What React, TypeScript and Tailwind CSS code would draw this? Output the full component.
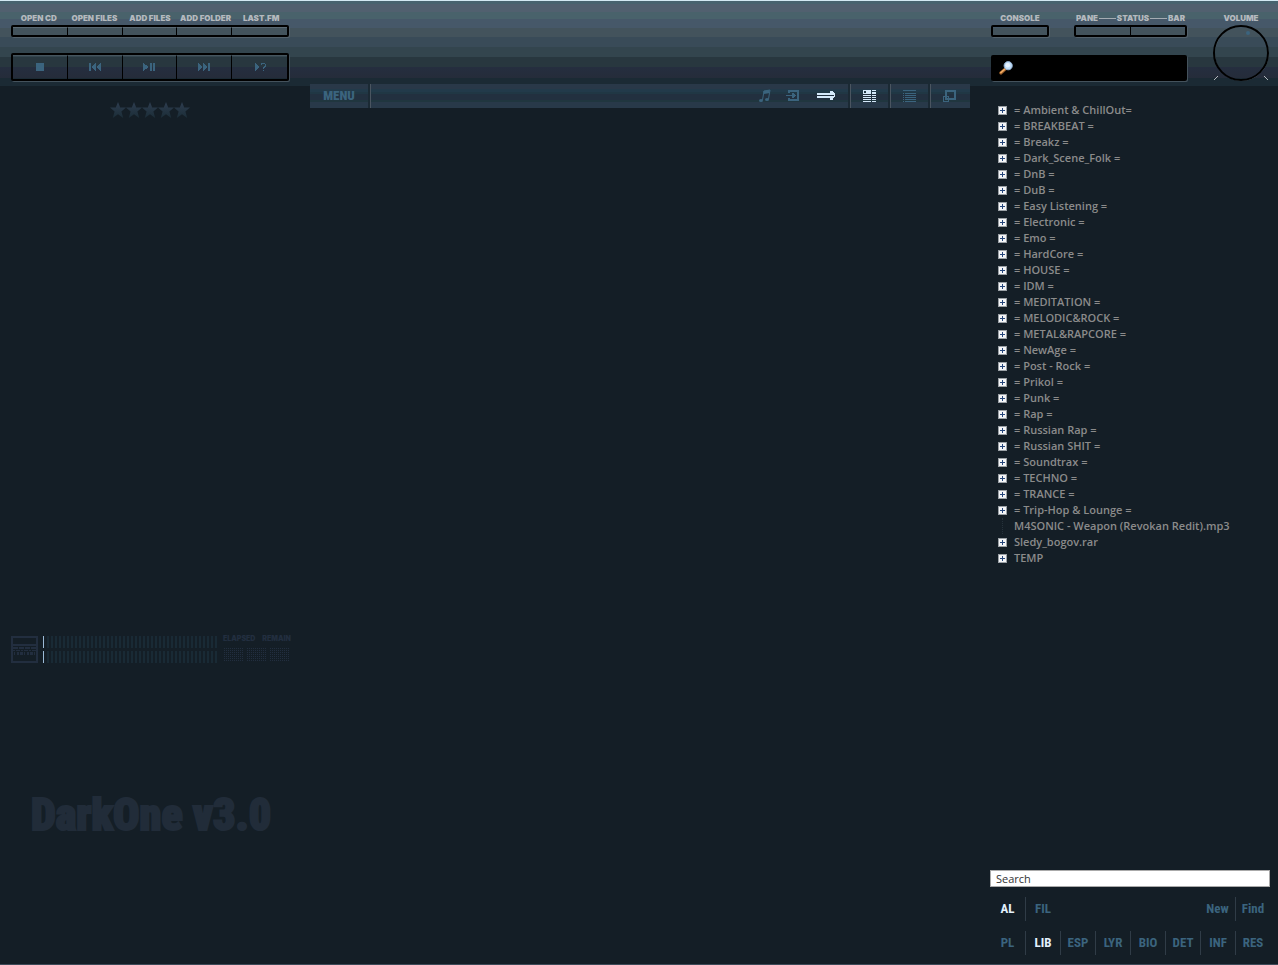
const HEADER_BG =
  "bg-[linear-gradient(180deg,#d3e9f3_0px,#d3e9f3_1px,#48636f_1px,#48636f_4px,#51606f_4px,#51606f_12px,#49626b_12px,#49626b_19px,#465869_19px,#465869_28px,#43535c_28px,#43535c_37px,#394b58_37px,#394b58_47px,#33454e_47px,#33454e_57px,#28373f_57px,#28373f_67px,#252e3f_67px,#252c3a_78px,#1b2a34_78px,#1b2a34_86px,#141e26_86px)]";

const LABEL = "font-[Inter,sans-serif] text-[8px] leading-[8px] font-black text-[#b4b9be] whitespace-nowrap";
const CONDENSED = "font-['Roboto_Condensed',Roboto,sans-serif]";

const openButtons = ["OPEN CD", "OPEN FILES", "ADD FILES", "ADD FOLDER", "LAST.FM"];

const playback = [
  { name: "Stop", icon: <path d="M5 2h8v8H5z" /> },
  { name: "Previous", icon: <path d="M3 2h2v8H3zM10 2v8L5 6zM15 2v8l-5-4z" /> },
  { name: "Play or pause", icon: <path d="M3 2l6 4-6 4zM10 2h2v8h-2zM13 2h2v8h-2z" /> },
  { name: "Next", icon: <path d="M3 2l5 4-5 4zM8 2l5 4-5 4zM13 2h2v8h-2z" /> },
  { name: "Random", icon: <path d="M4 2l5 4-5 4zM10 2h4v1h1v3h-1v1h-1v1h-1V6h1V5h1V3h-3v1h-1zM12 9h1v1h-1z" /> },
];

const folders = [
  "= Ambient & ChillOut=",
  "= BREAKBEAT =",
  "= Breakz =",
  "= Dark_Scene_Folk =",
  "= DnB =",
  "= DuB =",
  "= Easy Listening =",
  "= Electronic =",
  "= Emo =",
  "= HardCore =",
  "= HOUSE =",
  "= IDM =",
  "= MEDITATION =",
  "= MELODIC&ROCK =",
  "= METAL&RAPCORE =",
  "= NewAge =",
  "= Post - Rock =",
  "= Prikol =",
  "= Punk =",
  "= Rap =",
  "= Russian Rap =",
  "= Russian SHIT =",
  "= Soundtrax =",
  "= TECHNO =",
  "= TRANCE =",
  "= Trip-Hop & Lounge =",
  "M4SONIC - Weapon (Revokan Redit).mp3",
  "Sledy_bogov.rar",
  "TEMP",
];

const tabs = ["PL", "LIB", "ESP", "LYR", "BIO", "DET", "INF", "RES"];

const Star = () => (
  <svg width="16" height="16" viewBox="0 0 16 16" aria-hidden="true">
    <path d="M8 0l2.200 5.600H16l-4.600 3.900L13.200 16 8 12.200 2.800 16l1.800-6.500L0 5.600h5.800z" fill="url(#starFill)" />
  </svg>
);

const LeftHeader = () => (
  <div className="w-[310px] shrink-0 px-[11px] pt-[14px]">
    <div className="w-[278px]">
      <div className="grid grid-cols-5">
        {openButtons.map((label) => (
          <label key={label} htmlFor={label} className={`${LABEL} text-center`}>{label}</label>
        ))}
      </div>
      <div className="mt-[3px] grid h-3 grid-cols-5 divide-x divide-black rounded-xs border-2 border-black shadow-[1px_1px_0_#53616b]">
        {openButtons.map((label) => (
          <button key={label} id={label} className="border-t border-t-[#5b6a75] bg-[#43535c]" />
        ))}
      </div>
      <div className="mt-4 grid h-7 grid-cols-5 divide-x divide-black rounded-xs border-2 border-black shadow-[1px_1px_0_#44525c]">
        {playback.map(({ name, icon }) => (
          <button key={name} aria-label={name} className="flex items-center justify-center border-t border-t-[#46555e] pb-px">
            <svg width="18" height="12" viewBox="0 0 18 12" fill="#3b647e" shapeRendering="crispEdges">{icon}</svg>
          </button>
        ))}
      </div>
    </div>
  </div>
);

const RightHeader = () => (
  <div className="flex w-[308px] shrink-0 pt-[14px] pl-[21px]">
    <div className="w-[196px]">
      <div className="flex justify-between">
        <div className="w-[58px]">
          <label htmlFor="console" className={`${LABEL} block text-center`}>CONSOLE</label>
          <button id="console" className="mt-[3px] block h-3 w-full rounded-xs border-2 border-black shadow-[1px_1px_0_#53616b]" />
        </div>
        <div className="w-[113px]">
          <div className={`${LABEL} flex items-center gap-px px-[2px]`}>
            <span>PANE</span>
            <span className="h-px flex-1 bg-[#a4acb2]" />
            <span>STATUS</span>
            <span className="h-px flex-1 bg-[#a4acb2]" />
            <span>BAR</span>
          </div>
          <div className="mt-[3px] grid h-3 grid-cols-2 divide-x divide-black rounded-xs border-2 border-black shadow-[1px_1px_0_#53616b]">
            <button aria-label="Toggle pane" />
            <button aria-label="Toggle status bar" />
          </div>
        </div>
      </div>
      <label className="mt-[18px] flex h-[26px] items-center rounded-xs bg-black pl-2 shadow-[1px_1px_0_#44525c]">
        <svg width="16" height="16" viewBox="0 0 16 16" aria-hidden="true">
          <path d="M2 13.500L6.500 9.500" stroke="#8c5424" strokeWidth="3.500" strokeLinecap="round" />
          <path d="M2 13L6 9.500" stroke="#f0a860" strokeWidth="2" strokeLinecap="round" />
          <circle cx="10" cy="5.500" r="4.500" fill="#bfdcf8" stroke="#91aed0" />
          <circle cx="9.500" cy="5" r="2.500" fill="#e6f3ff" />
        </svg>
        <input aria-label="Quick search" className="w-full min-w-0 bg-transparent px-1 text-xs text-slate-300 outline-none" />
      </label>
    </div>
    <div className="ml-6 flex w-[60px] flex-col items-center">
      <span className={LABEL}>VOLUME</span>
      <button aria-label="Volume" className="mt-[3px]">
        <svg width="60" height="57" viewBox="0 0 60 57" fill="none">
          <circle cx="30.500" cy="28.500" r="27" stroke="#5b6a74" />
          <circle cx="30" cy="28" r="27" stroke="#000" strokeWidth="2" />
          <circle cx="37" cy="8" r="2" fill="#3b647e" />
          <path d="M3 55l4-4M53 51l4 4" stroke="#b4b9be" />
        </svg>
      </button>
    </div>
  </div>
);

const Toolbar = () => {
  const section = "flex h-6 items-center justify-center border-l border-[#4a5560]";
  return (
    <div className="flex h-6 items-center bg-[linear-gradient(180deg,#293848_0px,#293848_5px,#223a4a_5px,#223a4a_8px,#203744_8px,#203744_10px,#22303f_10px,#22303f_16px,#20363f_16px,#20363f_18px,#283949_18px)]">
      <button className={`${CONDENSED} h-6 w-[60px] border-r-2 border-[#1b2a34] text-[13px] font-black text-[#3b647e]`}>MENU</button>
      <div className={`${section} flex-1 justify-end gap-[13px] border-r-2 border-r-[#1b2a34] pr-3`}>
        <button aria-label="Now playing">
          <svg width="16" height="16" viewBox="0 0 16 16" fill="none" stroke="#3b647e">
            <path d="M4.500 12L6 3l6-1-1.500 9" />
            <path d="M5.500 4.500l6-1" strokeWidth="3" />
            <ellipse cx="3" cy="12.500" rx="2" ry="1.500" fill="#3b647e" stroke="none" />
            <ellipse cx="9" cy="11.500" rx="2" ry="1.500" fill="#3b647e" stroke="none" />
          </svg>
        </button>
        <button aria-label="Follow cursor">
          <svg width="16" height="16" viewBox="0 0 16 16" fill="#3b647e" className="overflow-visible" shapeRendering="crispEdges">
            <path d="M1 2h11v11H1v-3h2v1h7V4H3v1H1z" />
            <path d="M-1 7h6V5h2v1h1v1h1v1H8v1H7v1H5V8h-6z" />
          </svg>
        </button>
        <button aria-label="Playback order">
          <svg width="20" height="16" viewBox="0 0 20 16" fill="#d5e9fa" shapeRendering="crispEdges">
            <path d="M1 5h13V3h3v1h1v1h1v2H1zM1 8h18v1h-1v1h-1v2h-3v-2H1z" />
            <path d="M18 7h1v1h-1z" />
          </svg>
        </button>
      </div>
      <button aria-label="Cover view" className={`${section} w-10 border-r-2 border-r-[#1b2a34] pr-px`}>
        <svg width="14" height="14" viewBox="0 0 14 14" fill="#d5e9fa" shapeRendering="crispEdges">
          <path fillRule="evenodd" d="M1 1h8v4H1zM2 2v2h2V2zM10 1h4v1h-4zM10 3h4v2h-4zM1 6h8v1H1zM10 6h4v1h-4zM1 8h8v1H1zM10 8h4v1h-4zM1 10h8v1H1zM10 10h4v1h-4zM1 12h8v1H1zM10 12h4v1h-4z" />
        </svg>
      </button>
      <button aria-label="List view" className={`${section} w-10 border-r-2 border-r-[#1b2a34] pr-px`}>
        <svg width="14" height="14" viewBox="0 0 14 14" fill="#3b647e" shapeRendering="crispEdges">
          <path d="M1 1h13v1H1zM1 4h1v1H1zM3 4h11v1H3zM1 6h1v1H1zM3 6h11v1H3zM1 8h1v1H1zM3 8h11v1H3zM1 10h1v1H1zM3 10h11v1H3zM1 12h1v1H1zM3 12h11v1H3z" />
        </svg>
      </button>
      <button aria-label="Windows" className={`${section} w-10 pr-[3px]`}>
        <svg width="14" height="14" viewBox="0 0 14 14" fill="none" stroke="#3b647e" shapeRendering="crispEdges">
          <path d="M4 2h9v8H4z" strokeWidth="2" />
          <path d="M1.500 7.500h5v5h-5z" />
        </svg>
      </button>
    </div>
  );
};

const Player = () => (
  <div className="flex w-[310px] shrink-0 flex-col px-[11px]">
    <div className="ml-[99px] flex pt-[18px]">
      <svg width="0" height="0" aria-hidden="true">
        <linearGradient id="starFill" x1="0" y1="0" x2="0" y2="1">
          <stop offset="0" stopColor="#2e3d50" />
          <stop offset="1" stopColor="#1b2d37" />
        </linearGradient>
      </svg>
      {[1, 2, 3, 4, 5].map((n) => <Star key={n} />)}
    </div>
    <div className="mt-auto flex items-start pb-[127px]">
      <svg width="27" height="27" viewBox="0 0 27 27" fill="none" stroke="#222e3f" aria-hidden="true" shapeRendering="crispEdges">
        <path d="M1 1h25v25H1zM1 9h25" strokeWidth="2" />
        <path d="M2 12h24" strokeWidth="2" strokeDasharray="5 1" />
        <path d="M2 14.500h23" strokeDasharray="2 1 4 1" />
        <path d="M3 17.500h21" strokeWidth="3" strokeDasharray="1 2 2 1 3 1" />
      </svg>
      <svg className="ml-[5px]" width="175" height="28" viewBox="0 0 175 28" aria-hidden="true" shapeRendering="crispEdges">
        <path d="M4 6h171M4 21h171" stroke="#192a35" strokeWidth="12" strokeDasharray="2 2" />
        <path d="M0 0h1v12H0zM0 15h1v12H0z" fill="#9bbad6" />
      </svg>
      <div className="ml-[5px] w-[68px]">
        <div className="flex justify-between font-[Inter,sans-serif] text-[7px] leading-[6px] font-black text-[#222e3f]">
          <span>ELAPSED</span>
          <span>REMAIN</span>
        </div>
        <svg className="mt-[6px]" width="68" height="14" viewBox="0 0 68 14" aria-hidden="true" shapeRendering="crispEdges">
          {[0, 2, 4, 6, 8, 10, 12].map((y) => (
            <path key={y} d={`M1 ${y + 0.5}h20M24 ${y + 0.5}h20M47 ${y + 0.5}h20`} stroke="#222e3f" strokeDasharray="1 1" />
          ))}
        </svg>
      </div>
    </div>
    <h1 className={`${CONDENSED} pb-[125px] pl-5 text-[44px] leading-[48px] font-black whitespace-nowrap text-[#212c39] [-webkit-text-stroke:2px_#212c39]`}>
      DarkOne v3.0
    </h1>
  </div>
);

const Library = () => (
  <aside className="flex w-[308px] shrink-0 flex-col pt-[18px] pr-2 pl-5 font-['Open_Sans','Noto_Sans',sans-serif]">
    <ul className="ml-2">
      {folders.map((name) => (
        <li key={name} className="flex h-4 items-center text-[11px] leading-4 font-semibold whitespace-nowrap text-[#8b8b8b]">
          {name.endsWith(".mp3") ? (
            <span className="ml-1 h-4 w-3 border-l border-dotted border-[#26323b]" />
          ) : (
            <button aria-label={`Expand ${name}`} className="mr-[7px]">
              <svg width="9" height="9" viewBox="0 0 9 9" shapeRendering="crispEdges">
                <path d="M0 0h9v9H0z" fill="#9aa0a5" />
                <path d="M1 1h7v7H1z" fill="#f4f5f7" />
                <path d="M4 2h1v2h2v1H5v2H4V5H2V4h2z" fill="#24457a" />
              </svg>
            </button>
          )}
          {name}
        </li>
      ))}
    </ul>
    <div className="mt-auto">
      <input
        aria-label="Search library"
        defaultValue="Search"
        className="block h-[17px] w-full border border-[#aaaaaa] bg-white px-[5px] text-[11px] leading-4 text-[#333333] outline-none"
      />
      <nav className={`${CONDENSED} text-[13px] font-bold text-[#3b647e]`}>
        <div className="mt-[10px] flex h-6">
          <button className="w-[35px] text-[#e2f0fc]">AL</button>
          <button className="w-[35px] border-l border-[#303c47]">FIL</button>
          <button className="ml-auto w-[35px]">New</button>
          <button className="w-[35px] border-l border-[#303c47]">Find</button>
        </div>
        <div className="mt-[10px] mb-[9px] flex h-6">
          {tabs.map((tab) => (
            <button
              key={tab}
              className={`w-[35px] border-l border-[#303c47] first:border-l-0 ${tab === "LIB" ? "text-[#e2f0fc]" : ""}`}
            >
              {tab}
            </button>
          ))}
        </div>
      </nav>
    </div>
  </aside>
);

export default function App() {
  return (
    <div className="flex min-h-screen flex-col border-b border-[#3d4a58] bg-[#141e26]">
      <header className={`flex h-[84px] justify-between ${HEADER_BG}`}>
        <LeftHeader />
        <RightHeader />
      </header>
      <main className="flex flex-1 bg-[linear-gradient(180deg,#1b2a34_2px,#141e26_2px)]">
        <Player />
        <section className="min-w-0 flex-1">
          <Toolbar />
        </section>
        <Library />
      </main>
    </div>
  );
}
